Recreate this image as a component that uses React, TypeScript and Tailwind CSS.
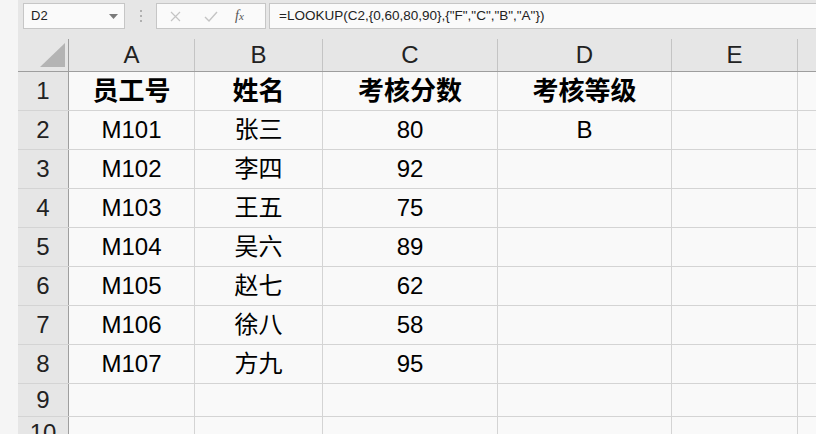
import React from "react";

const cols = [
  { k: "A", w: "w-[126px]" },
  { k: "B", w: "w-[128px]" },
  { k: "C", w: "w-[175px]" },
  { k: "D", w: "w-[174px]" },
  { k: "E", w: "w-[126px]" },
];

const data: [string, string, string, string][] = [
  ["M101", "张三", "80", "B"],
  ["M102", "李四", "92", ""],
  ["M103", "王五", "75", ""],
  ["M104", "吴六", "89", ""],
  ["M105", "赵七", "62", ""],
  ["M106", "徐八", "58", ""],
  ["M107", "方九", "95", ""],
];

const latin = { fontFamily: '"Liberation Sans", Arial, sans-serif' };
const cjk = { fontFamily: '"Liberation Sans", "Noto Sans CJK SC", sans-serif' };

function Cell({ w, children, bold, cjkText }: { w: string; children?: React.ReactNode; bold?: boolean; cjkText?: boolean }) {
  return (
    <div
      className={`${w} shrink-0 h-full border-r border-[#d4d4d4] flex items-center justify-center text-black ${
        bold ? "font-bold text-[26px]" : cjkText ? "text-[24px]" : "text-[24px]"
      }`}
      style={cjkText || bold ? cjk : latin}
    >
      {children}
    </div>
  );
}

function RowHead({ n }: { n: number }) {
  return (
    <div
      className="w-[51px] shrink-0 h-full bg-[#e6e6e6] border-r border-[#9e9e9e] flex items-center justify-center text-[24px] text-[#222]"
      style={latin}
    >
      {n}
    </div>
  );
}

export default function App() {
  const rows: { n: number; h: string; cells: string[]; header?: boolean }[] = [
    { n: 1, h: "h-[39px]", cells: ["员工号", "姓名", "考核分数", "考核等级", ""], header: true },
    ...data.map((d, i) => ({ n: i + 2, h: "h-[39px]", cells: [d[0], d[1], d[2], d[3], ""] })),
    { n: 9, h: "h-[33px]", cells: ["", "", "", "", ""] },
    { n: 10, h: "h-[33px]", cells: ["", "", "", "", ""] },
  ];

  return (
    <div className="w-[816px] h-[434px] overflow-hidden flex bg-[#f9f9f9]">
      <div className="w-[18px] shrink-0 h-full bg-[#f5f5f5]" />
      <div className="flex-1 flex flex-col min-w-0">
        {/* Formula bar */}
        <div className="h-[39px] shrink-0 bg-[#e6e6e6] flex items-start pt-[3px]">
          <div className="ml-[5px] w-[102px] h-[26px] border border-[#c6c6c6] bg-[#fafafa] flex items-center pl-[7px] pr-[6px]">
            <span className="text-[13px] text-[#222] flex-1" style={latin}>D2</span>
            <svg width="9" height="5" viewBox="0 0 9 5" className="mt-[1px]">
              <path d="M0 0 L9 0 L4.5 5 Z" fill="#7a7a7a" />
            </svg>
          </div>
          <div className="w-[31px] h-[26px] flex flex-col items-center justify-center gap-[3px]">
            <span className="w-[2px] h-[2px] bg-[#b0b0b0]" />
            <span className="w-[2px] h-[2px] bg-[#b0b0b0]" />
            <span className="w-[2px] h-[2px] bg-[#b0b0b0]" />
          </div>
          <div className="w-[110px] h-[26px] border border-[#c6c6c6] bg-[#fafafa] flex items-center">
            <svg width="11" height="11" viewBox="0 0 11 11" className="ml-[13px]">
              <path d="M1 1 L10 10 M10 1 L1 10" stroke="#c4c4c4" strokeWidth="1.2" />
            </svg>
            <svg width="14" height="11" viewBox="0 0 14 11" className="ml-[23px]">
              <path d="M1 6 L5 10 L13 1" stroke="#c4c4c4" strokeWidth="1.4" fill="none" />
            </svg>
            <span className="ml-[17px] text-[#555] italic text-[14px] leading-none" style={{ fontFamily: '"Liberation Serif", serif' }}>
              f<span className="text-[11px]">x</span>
            </span>
          </div>
          <div className="ml-[3px] flex-1 h-[26px] border-y border-l border-[#c6c6c6] bg-[#fafafa] flex items-center pl-[9px]">
            <span className="text-[13.5px] text-[#222] whitespace-nowrap" style={latin}>
              =LOOKUP(C2,{"{"}0,60,80,90{"}"},{"{"}"F","C","B","A"{"}"})
            </span>
          </div>
        </div>

        {/* Column header */}
        <div className="h-[33px] shrink-0 flex bg-[#e6e6e6] border-b border-[#9e9e9e]">
          <div className="w-[51px] shrink-0 h-full border-r border-[#9e9e9e] relative">
            <svg width="50" height="32" viewBox="0 0 50 32" className="absolute left-0 top-0">
              <path d="M47 4 L47 28 L22 28 Z" fill="#b4b4b4" />
            </svg>
          </div>
          {cols.map((c) => (
            <div
              key={c.k}
              className={`${c.w} shrink-0 h-full border-r border-[#c4c4c4] flex items-center justify-center text-[24px] text-[#222]`}
              style={latin}
            >
              {c.k}
            </div>
          ))}
          <div className="flex-1" />
        </div>

        {/* Rows */}
        {rows.map((r) => (
          <div key={r.n} className={`${r.h} shrink-0 flex border-b border-[#d4d4d4]`}>
            <RowHead n={r.n} />
            {cols.map((c, i) => {
              const v = r.cells[i];
              const isCjk = /[\u4e00-\u9fff]/.test(v);
              return (
                <Cell key={c.k} w={c.w} bold={r.header} cjkText={isCjk}>
                  {v}
                </Cell>
              );
            })}
            <div className="flex-1" />
          </div>
        ))}
      </div>
    </div>
  );
}
